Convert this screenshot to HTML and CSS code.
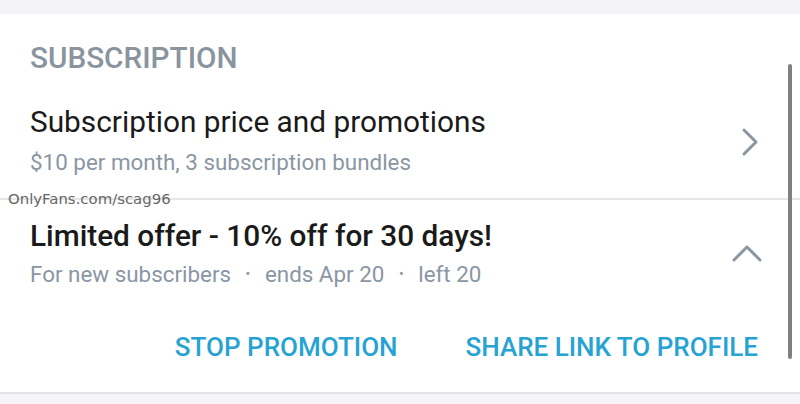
FILE: index.html
```html
<!DOCTYPE html>
<html lang="en">
<head>
<meta charset="UTF-8" />
<title>Subscription</title>
<link rel="stylesheet" href="styles.css">
</head>
<body>
<div class="top-band"></div>

<section class="card">
  <h2 class="section-title">SUBSCRIPTION</h2>

  <div class="row">
    <div class="row-text">
      <div class="row-title">Subscription price and promotions</div>
      <div class="row-sub">$10 per month, 3 subscription bundles</div>
    </div>
    <svg class="chevron" viewBox="0 0 24 32" width="24" height="32">
      <path d="M6 4 L18 16 L6 28" />
    </svg>
  </div>

  <div class="divider"></div>

  <div class="row promo">
    <div class="row-text">
      <div class="row-title bold">Limited offer - 10% off for 30 days!</div>
      <div class="row-sub">For new subscribers <span class="dot">•</span> ends Apr 20 <span class="dot">•</span> left 20</div>
    </div>
    <svg class="chevron up" viewBox="0 0 32 20" width="32" height="20">
      <path d="M3 17 L16 4 L29 17" />
    </svg>
  </div>

  <div class="actions">
    <button class="link-btn">STOP PROMOTION</button>
    <button class="link-btn">SHARE LINK TO PROFILE</button>
  </div>

  <div class="scrollbar"></div>
</section>

<div class="bottom-band"></div>

<span class="watermark">OnlyFans.com/scag96</span>
</body>
</html>
```

FILE: styles.css
```css
body {
  margin: 0;
  font-family: Roboto, "Noto Sans", sans-serif;
  background: #f4f4f8;
  width: 800px;
  height: 404px;
  overflow: hidden;
  position: relative;
}
.top-band {
  height: 14px;
  background: #f4f4f8;
}
.card {
  position: relative;
  background: #fff;
  height: 380px;
  border-bottom: 2px solid #e4e4e6;
  box-sizing: border-box;
  padding-top: 27px;
}
.section-title {
  margin: 0 0 0 30px;
  font-size: 29.7px;
  font-weight: 500;
  color: #8a949f;
  line-height: 34px;
}
.row {
  display: flex;
  align-items: center;
  padding: 0 38px 0 30px;
}
.row-text {
  flex: 1;
}
.row-title {
  font-size: 29.8px;
  color: #1a1a1a;
  line-height: 36px;
  margin-top: 29px;
}
.row-title.bold {
  font-weight: 500;
  margin-top: 18px;
}
.row-sub {
  font-size: 22.4px;
  color: #8a96a3;
  line-height: 26px;
  margin-top: 9px;
}
.promo .row-sub {
  margin-top: 7px;
}
.row-sub .dot {
  font-size: 14px;
  padding: 0 9px;
  vertical-align: 3px;
}
.chevron path {
  fill: none;
  stroke: #8a96a3;
  stroke-width: 3;
  stroke-linecap: round;
  stroke-linejoin: round;
}
.chevron {
  margin-top: 33px;
}
.chevron.up {
  margin-top: 19px;
  margin-right: -1px;
}
.divider {
  height: 2px;
  background: #e6e6e8;
  margin-top: 23px;
}
.actions {
  display: flex;
  justify-content: flex-end;
  gap: 68px;
  padding-right: 42px;
  margin-top: 45px;
}
.link-btn {
  background: none;
  border: 0;
  padding: 0;
  font-family: Roboto, sans-serif;
  font-size: 26px;
  font-weight: 500;
  color: #26a3d3;
  line-height: 30px;
  cursor: pointer;
}
.scrollbar {
  position: absolute;
  right: 8px;
  top: 50px;
  width: 4px;
  height: 295px;
  border-radius: 2px;
  background: #808080;
}
.watermark {
  position: absolute;
  left: 8px;
  top: 190px;
  font-family: "DejaVu Sans", sans-serif;
  font-size: 14.9px;
  color: #666;
}
```
